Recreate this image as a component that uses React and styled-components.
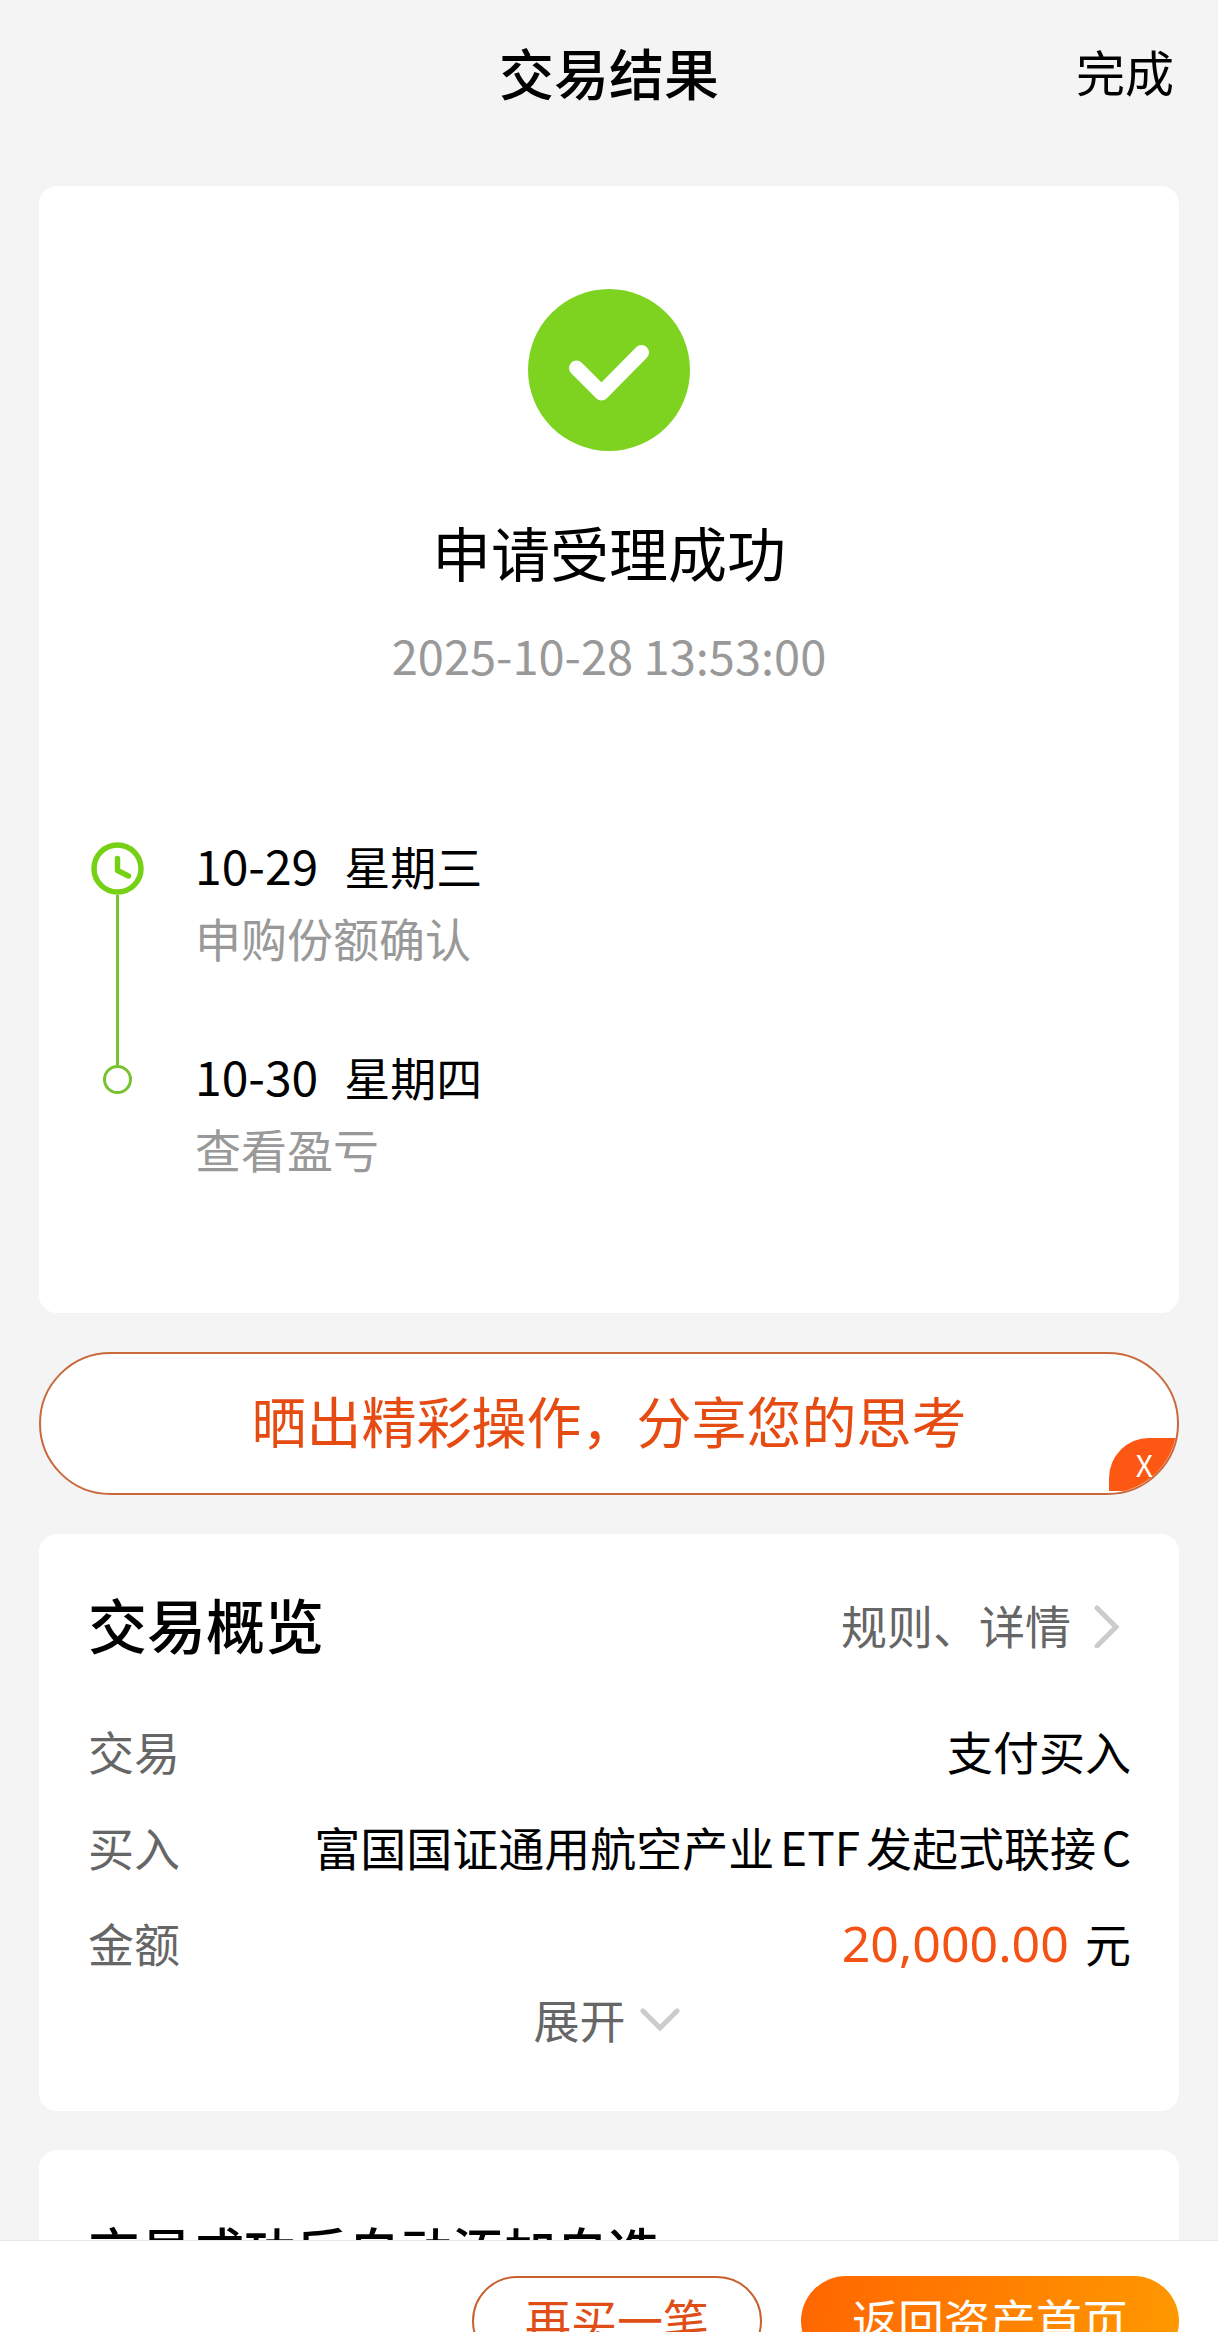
import React from "react";
import styled, { createGlobalStyle } from "styled-components";

const GlobalStyle = createGlobalStyle`
    * {
        box-sizing: border-box;
    }
    body {
        margin: 0;
        background-color: #f4f4f4;
        color: #000;
        font-family: 'Noto Sans CJK SC', sans-serif;
        text-autospace: normal;
    }
    button {
        font-family: inherit;
        padding: 0;
        border: none;
        background: none;
        cursor: pointer;
    }
    h1, h2, p, dl, dd, ol {
        margin: 0;
        padding: 0;
    }
`;

const Screen = styled.div`
    display: flex;
    flex-direction: column;
    height: 100vh;
`;

const Header = styled.header`
    display: grid;
    grid-template-columns: 1fr auto 1fr;
    align-items: center;
    padding: 31px 44px 0;
    margin-bottom: 75px;
`;

const PageTitle = styled.h1`
    grid-column: 2;
    font-size: 55px;
    line-height: 80px;
    font-weight: 500;
`;

const DoneButton = styled.button`
    justify-self: end;
    font-size: 49px;
    line-height: 80px;
    color: #000;
`;

const Content = styled.main`
    flex: 1;
    min-height: 0;
    overflow: hidden;
`;

const Stack = styled.div`
    display: flex;
    flex-direction: column;
    gap: 39px;
    padding: 0 39px;
`;

const Card = styled.section`
    background-color: #fff;
    border-radius: 18px;
    padding: ${props => props.$padding};
`;

const Result = styled.div`
    display: flex;
    flex-direction: column;
    align-items: center;
`;

const ResultTitle = styled.h2`
    margin-top: 57px;
    font-size: 59px;
    line-height: 88px;
    font-weight: 400;
`;

const ResultTime = styled.p`
    margin-top: 24px;
    font-size: 47px;
    line-height: 70px;
    color: #999;
`;

const Timeline = styled.ol`
    list-style: none;
    margin-top: 139px;
`;

const Step = styled.li`
    display: grid;
    grid-template-columns: 57px 1fr;
    column-gap: 49px;
    padding-bottom: ${props => (props.$last ? "0" : "67px")};
`;

const Marker = styled.div`
    display: flex;
    flex-direction: column;
    align-items: center;
    margin-bottom: ${props => (props.$last ? "0" : "-92px")};
    padding-top: ${props => (props.$last ? "25px" : "13px")};
`;

const Line = styled.div`
    flex: 1;
    width: 3px;
    background-color: #76c22f;
`;

const StepDate = styled.p`
    display: flex;
    align-items: baseline;
    gap: 26px;
    font-size: 46px;
    line-height: 72px;
`;

const Day = styled.span`
    font-size: 48px;
    line-height: 60px;
`;

const StepText = styled.p`
    font-size: 46px;
    line-height: 72px;
    color: #999;
`;

const ShareBanner = styled.div`
    position: relative;
    display: flex;
    overflow: hidden;
    border: 2px solid #c9693c;
    border-radius: 72px;
    background-color: #fff;
`;

const ShareButton = styled.button`
    flex: 1;
    padding-bottom: 8px;
    font-size: 55px;
    line-height: 131px;
    color: #e64b12;
`;

const CloseButton = styled.button`
    position: absolute;
    right: 0;
    bottom: 2px;
    width: 68px;
    height: 53px;
    padding-right: 24px;
    border-radius: 40px 0 0 0;
    background-color: #fc5814;
    color: #fff;
    font-size: 30px;
    line-height: 53px;
    text-align: right;
`;

const CardHead = styled.div`
    display: flex;
    align-items: center;
    justify-content: space-between;
    margin-bottom: 34px;
`;

const CardTitle = styled.h2`
    font-size: ${props => props.$size};
    line-height: 88px;
    font-weight: 500;
`;

const RulesLink = styled.a`
    display: flex;
    align-items: center;
    gap: 22px;
    padding-right: 11px;
    font-size: 46px;
    line-height: 72px;
    color: #666;
    text-decoration: none;
`;

const DetailRow = styled.div`
    display: flex;
    justify-content: space-between;
    font-size: 46px;
    line-height: 96px;
`;

const Label = styled.dt`
    color: #666;
`;

const Amount = styled.span`
    margin-right: 10px;
    font-family: 'Noto Sans', sans-serif;
    font-size: 50px;
    line-height: 72px;
    color: #f45114;
`;

const ExpandButton = styled.button`
    display: flex;
    align-items: center;
    gap: 14px;
    margin: 0 auto;
    font-size: 46px;
    line-height: 56px;
    color: #666;
`;

const BottomBar = styled.footer`
    display: flex;
    justify-content: flex-end;
    align-items: flex-start;
    gap: 39px;
    max-height: 92px;
    overflow: hidden;
    padding: 35px 39px;
    border-top: 1px solid #e6e6e6;
    background-color: #fff;
`;

const ActionButton = styled.button`
    flex: none;
    height: 90px;
    padding: 0 51px 6px;
    border: ${props => (props.$primary ? "none" : "2px solid #c9602f")};
    border-radius: 45px;
    background: ${props => (props.$primary ? "linear-gradient(100deg, #ff6600, #ff9900)" : "#fff")};
    color: ${props => (props.$primary ? "#fff" : "#e04e18")};
    font-size: 46px;
    line-height: 80px;
`;

const SuccessIcon = () => (
    <svg width="162" height="162" viewBox="0 0 162 162" fill="none" aria-hidden="true">
        <circle cx="81" cy="81" r="81" fill="#7ed321" />
        <path d="M48.5 79L73.5 104L113.5 63.5" stroke="#fff" strokeWidth="15" strokeLinecap="round" strokeLinejoin="round" />
    </svg>
);

const ClockIcon = () => (
    <svg width="53" height="53" viewBox="0 0 53 53" fill="none" aria-hidden="true">
        <circle cx="26.5" cy="26.5" r="23.5" stroke="#76d016" strokeWidth="5.5" />
        <path d="M26.5 16.5V28.5L37.5 34" stroke="#76d016" strokeWidth="5.5" strokeLinecap="round" strokeLinejoin="round" />
    </svg>
);

const DotIcon = () => (
    <svg width="29" height="29" viewBox="0 0 29 29" fill="none" aria-hidden="true">
        <circle cx="14.5" cy="14.5" r="13" fill="#fff" stroke="#76c22f" strokeWidth="3" />
    </svg>
);

const ArrowRight = () => (
    <svg width="27" height="48" viewBox="0 0 27 48" fill="none" aria-hidden="true">
        <path d="M4 8L23 27L4 46" stroke="#ccc" strokeWidth="5" strokeLinecap="round" />
    </svg>
);

const ArrowDown = () => (
    <svg width="46" height="30" viewBox="0 0 46 30" fill="none" aria-hidden="true">
        <path d="M3 8L20 25L37 8" stroke="#ccc" strokeWidth="5" strokeLinecap="round" />
    </svg>
);

const App = () => {
    return (
        <>
            <GlobalStyle />
            <Screen>
                <Header>
                    <PageTitle>交易结果</PageTitle>
                    <DoneButton type="button">完成</DoneButton>
                </Header>
                <Content>
                    <Stack>
                        <Card $padding="103px 50px 129px">
                            <Result>
                                <SuccessIcon />
                                <ResultTitle>申请受理成功</ResultTitle>
                                <ResultTime>2025-10-28 13:53:00</ResultTime>
                            </Result>
                            <Timeline>
                                <Step>
                                    <Marker>
                                        <ClockIcon />
                                        <Line />
                                    </Marker>
                                    <div>
                                        <StepDate><Day>10-29</Day><span>星期三</span></StepDate>
                                        <StepText>申购份额确认</StepText>
                                    </div>
                                </Step>
                                <Step $last>
                                    <Marker $last>
                                        <DotIcon />
                                    </Marker>
                                    <div>
                                        <StepDate><Day>10-30</Day><span>星期四</span></StepDate>
                                        <StepText>查看盈亏</StepText>
                                    </div>
                                </Step>
                            </Timeline>
                        </Card>

                        <ShareBanner>
                            <ShareButton type="button">晒出精彩操作，分享您的思考</ShareButton>
                            <CloseButton type="button">X</CloseButton>
                        </ShareBanner>

                        <Card $padding="46px 48px 65px 49px">
                            <CardHead>
                                <CardTitle $size="59px">交易概览</CardTitle>
                                <RulesLink href="#rules">
                                    规则、详情
                                    <ArrowRight />
                                </RulesLink>
                            </CardHead>
                            <dl>
                                <DetailRow>
                                    <Label>交易</Label>
                                    <dd>支付买入</dd>
                                </DetailRow>
                                <DetailRow>
                                    <Label>买入</Label>
                                    <dd>富国国证通用航空产业ETF发起式联接C</dd>
                                </DetailRow>
                                <DetailRow>
                                    <Label>金额</Label>
                                    <dd><Amount>20,000.00</Amount>元</dd>
                                </DetailRow>
                            </dl>
                            <ExpandButton type="button">
                                展开
                                <ArrowDown />
                            </ExpandButton>
                        </Card>

                        <Card $padding="56px 49px">
                            <CardTitle $size="52px">交易成功后自动添加自选</CardTitle>
                        </Card>
                    </Stack>
                </Content>
                <BottomBar>
                    <ActionButton type="button">再买一笔</ActionButton>
                    <ActionButton type="button" $primary>返回资产首页</ActionButton>
                </BottomBar>
            </Screen>
        </>
    );
};

export default App;
